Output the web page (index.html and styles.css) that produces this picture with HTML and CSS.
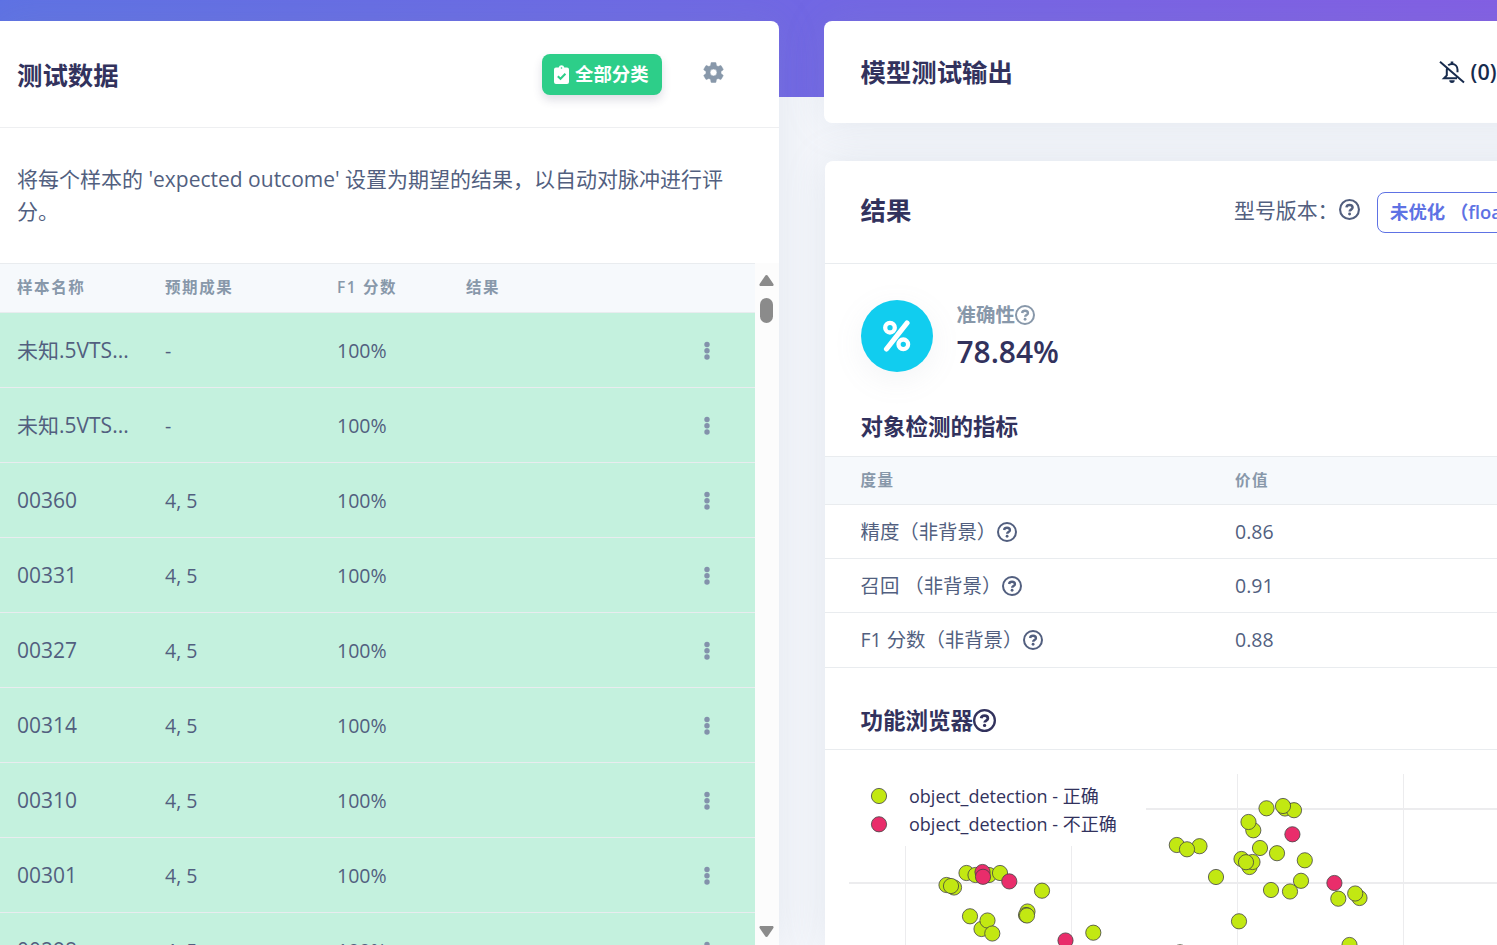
FILE: index.html
```html
<!DOCTYPE html>
<html lang="zh-CN">
<head>
<meta charset="utf-8">
<title>模型测试</title>
<link rel="stylesheet" href="styles.css">
</head>
<body>
<svg class="defs" width="0" height="0">
  <symbol id="help" viewBox="0 0 24 24"><g fill="none" stroke="currentColor"><circle cx="12" cy="12" r="10.800" stroke-width="2.400"/><path d="M8.500 9.600C8.800 7.900 10.200 6.900 12 6.900c2 0 3.500 1.100 3.500 2.900 0 2.300-3.300 2.300-3.300 4.400" stroke-width="2.900"/></g><circle cx="12.100" cy="17.100" r="1.700" fill="currentColor"/></symbol>
  <symbol id="dots" viewBox="0 0 6 20"><g fill="#8392ab"><circle cx="3" cy="3.500" r="2.700"/><circle cx="3" cy="9.700" r="2.700"/><circle cx="3" cy="16" r="2.700"/></g></symbol>
</svg>
<div class="banner"></div>
<main class="page">
  <section class="card samples">
    <header class="samples-head">
      <h2>测试数据</h2>
      <button class="classify"><svg width="15" height="19" viewBox="0 0 15 19"><path fill="#fff" d="M2 2.500h2.700a2.900 2.900 0 0 1 5.600 0H13a2 2 0 0 1 2 2V17a2 2 0 0 1-2 2H2a2 2 0 0 1-2-2V4.500a2 2 0 0 1 2-2z"/><path d="M3.800 11.200l2.700 2.600 4.900-5" fill="none" stroke="#2dce89" stroke-width="2"/><circle cx="7.500" cy="3" r=".8" fill="#2dce89"/></svg><span>全部分类</span></button>
      <svg class="gear" width="25" height="25" viewBox="0 0 24 24"><path fill="#8898aa" stroke="#8898aa" stroke-width=".5" d="M19.140 12.940c.04-.3.060-.610.060-.940 0-.320-.020-.640-.070-.940l2.030-1.580a.49.49 0 0 0 .12-.610l-1.920-3.320a.488.488 0 0 0-.590-.220l-2.390.960c-.5-.380-1.030-.700-1.620-.940l-.360-2.540a.484.484 0 0 0-.480-.410h-3.840c-.240 0-.430.170-.470.410l-.360 2.540c-.590.240-1.130.570-1.620.940l-2.390-.960c-.220-.080-.470 0-.590.220L2.740 8.870c-.120.210-.080.470.120.610l2.030 1.580c-.050.300-.090.630-.090.940s.020.640.070.940l-2.030 1.580a.49.49 0 0 0-.120.610l1.920 3.320c.120.220.370.290.590.220l2.390-.960c.500.380 1.030.700 1.620.940l.360 2.540c.050.240.240.410.480.410h3.840c.240 0 .440-.170.470-.410l.360-2.540c.590-.240 1.130-.560 1.620-.940l2.390.960c.220.080.470 0 .590-.220l1.920-3.320c.120-.220.070-.470-.120-.610l-2.010-1.580zM12 15.300a3.300 3.300 0 1 1 0-6.600 3.300 3.300 0 0 1 0 6.600z"/></svg>
    </header>
    <p class="hint">将每个样本的 'expected outcome' 设置为期望的结果，以自动对脉冲进行评分。</p>
    <div class="table-wrap">
      <div class="table">
        <div class="tr th"><span>样本名称</span><span>预期成果</span><span>F1 分数</span><span>结果</span><i></i></div>
        <div class="tr cjk"><span>未知.5VTS...</span><span>-</span><span>100%</span><span></span><svg><use href="#dots"/></svg></div>
        <div class="tr cjk"><span>未知.5VTS...</span><span>-</span><span>100%</span><span></span><svg><use href="#dots"/></svg></div>
        <div class="tr"><span>00360</span><span>4, 5</span><span>100%</span><span></span><svg><use href="#dots"/></svg></div>
        <div class="tr"><span>00331</span><span>4, 5</span><span>100%</span><span></span><svg><use href="#dots"/></svg></div>
        <div class="tr"><span>00327</span><span>4, 5</span><span>100%</span><span></span><svg><use href="#dots"/></svg></div>
        <div class="tr"><span>00314</span><span>4, 5</span><span>100%</span><span></span><svg><use href="#dots"/></svg></div>
        <div class="tr"><span>00310</span><span>4, 5</span><span>100%</span><span></span><svg><use href="#dots"/></svg></div>
        <div class="tr"><span>00301</span><span>4, 5</span><span>100%</span><span></span><svg><use href="#dots"/></svg></div>
        <div class="tr"><span>00298</span><span>4, 5</span><span>100%</span><span></span><svg><use href="#dots"/></svg></div>
      </div>
      <div class="scrollbar">
        <svg width="15" height="11" viewBox="0 0 15 11"><path fill="#8b8b8b" d="M6.200.8a1.500 1.500 0 0 1 2.600 0l5.600 8.200c.5.900 0 2-1.100 2H1.700C.6 11 .1 9.900.6 9z"/></svg>
        <div class="thumb"></div>
        <svg class="down" width="15" height="11" viewBox="0 0 15 11"><path fill="#8b8b8b" d="M6.200 10.200a1.500 1.500 0 0 0 2.600 0L14.400 2c.5-.9 0-2-1.100-2H1.700C.6 0 .1 1.100.6 2z"/></svg>
      </div>
    </div>
  </section>
  <div class="right">
    <section class="card output">
      <h2>模型测试输出</h2>
      <div class="bell"><svg width="26" height="26" viewBox="0 0 26 26" fill="none" stroke="#172b4d" stroke-width="2"><path d="M1 2.700L25 23.500M9.200 6.300C10.300 5.400 11.600 5 13 5c3.300 0 5.500 2.500 5.500 5.700v2.500M8 9.500c-.2.700-.2 1-.2 1.700v5.200L5 19.300h13"/><path d="M13 2.500v3" stroke-width="2.600"/><path d="M10.300 21.200h5.400a2.700 2.700 0 0 1-5.400 0z" fill="#172b4d" stroke="none"/></svg><span>(0)</span></div>
    </section>
    <section class="card results">
      <header class="results-head">
        <h2>结果</h2>
        <div class="version"><span>型号版本：</span><svg class="help"><use href="#help"/></svg><button class="select">未优化 （float32）</button></div>
      </header>
      <div class="accuracy">
        <div class="badge"><svg width="30" height="32" viewBox="0 0 30 32" fill="none" stroke="#fff"><path d="M4.500 29L25 3" stroke-width="5.200" stroke-linecap="round"/><circle cx="8" cy="7.700" r="4.800" stroke-width="4.300"/><circle cx="21.300" cy="24.300" r="4.800" stroke-width="4.300"/></svg></div>
        <div class="score"><div class="score-label">准确性<svg class="help"><use href="#help"/></svg></div><strong>78.84%</strong></div>
      </div>
      <h3>对象检测的指标</h3>
      <div class="metrics">
        <div class="metric mh"><span>度量</span><span>价值</span></div>
        <div class="metric"><span>精度（非背景）<svg class="help"><use href="#help"/></svg></span><span>0.86</span></div>
        <div class="metric"><span>召回 （非背景）<svg class="help"><use href="#help"/></svg></span><span>0.91</span></div>
        <div class="metric last"><span>F1 分数（非背景）<svg class="help"><use href="#help"/></svg></span><span>0.88</span></div>
      </div>
      <h3 class="explorer">功能浏览器<svg class="help"><use href="#help"/></svg></h3>
      <svg class="plot" width="672" height="195" viewBox="825 750 672 195">
        <g stroke="#ececee" stroke-width="2" fill="none"><path d="M1146 809H1497M849 883H1497"/><path stroke-width="1" d="M905.500 846V945M1071.500 846V945M1237.500 774V945M1403.500 774V945"/></g>
        <g fill="#c2e812" stroke="#444" stroke-opacity=".8" stroke-width="1">
          <circle cx="954" cy="887.500" r="7.600"/><circle cx="946.500" cy="885" r="7.600"/><circle cx="951" cy="886" r="7.600"/>
          <circle cx="966.500" cy="873" r="7.600"/><circle cx="989" cy="875" r="7.600"/><circle cx="975.500" cy="875" r="7.600"/><circle cx="1000" cy="873" r="7.600"/>
          <circle cx="1042" cy="890.700" r="7.600"/><circle cx="970" cy="916.300" r="7.600"/><circle cx="981.500" cy="929" r="7.600"/><circle cx="987.500" cy="920.500" r="7.600"/><circle cx="992.300" cy="933.500" r="7.600"/>
          <circle cx="1027.500" cy="911.500" r="7.600"/><circle cx="1026" cy="915" r="7.600"/><circle cx="1027" cy="915.500" r="7.600"/><circle cx="1093.300" cy="932.700" r="7.600"/>
          <circle cx="1176.800" cy="845" r="7.600"/><circle cx="1199.500" cy="846.200" r="7.600"/><circle cx="1187" cy="849.300" r="7.600"/>
          <circle cx="1266.500" cy="808.300" r="7.600"/><circle cx="1285" cy="808.500" r="7.600"/><circle cx="1294" cy="810.200" r="7.600"/><circle cx="1283" cy="806" r="7.600"/>
          <circle cx="1253.300" cy="830.300" r="7.600"/><circle cx="1248.500" cy="822" r="7.600"/><circle cx="1260" cy="848" r="7.600"/><circle cx="1277" cy="853.200" r="7.600"/><circle cx="1304.800" cy="860.300" r="7.600"/>
          <circle cx="1249.500" cy="867" r="7.600"/><circle cx="1241.500" cy="859" r="7.600"/><circle cx="1252.500" cy="862" r="7.600"/><circle cx="1246" cy="862.200" r="7.600"/>
          <circle cx="1216" cy="877" r="7.600"/><circle cx="1271" cy="890" r="7.600"/><circle cx="1290" cy="891.500" r="7.600"/><circle cx="1301" cy="880.800" r="7.600"/>
          <circle cx="1338.300" cy="898.700" r="7.600"/><circle cx="1359.500" cy="898" r="7.600"/><circle cx="1355.200" cy="893.500" r="7.600"/><circle cx="1239" cy="921.300" r="7.600"/><circle cx="1349.500" cy="945" r="7.600"/><circle cx="1180" cy="952.300" r="7.600"/>
          <circle cx="879" cy="796" r="7.600"/>
        </g>
        <g fill="#e92d6b" stroke="#444" stroke-opacity=".8" stroke-width="1"><circle cx="982.500" cy="872" r="7.600"/><circle cx="983" cy="876.800" r="7.600"/><circle cx="1009.300" cy="881.400" r="7.600"/><circle cx="1065.500" cy="940.500" r="7.600"/><circle cx="1292.400" cy="834.300" r="7.600"/><circle cx="1334.400" cy="883" r="7.600"/><circle cx="879" cy="824.300" r="7.600"/></g>
        <g class="legend"><text x="909" y="803">object_detection - 正确</text><text x="909" y="831">object_detection - 不正确</text></g>
      </svg>
    </section>
  </div>
</main>
</body>
</html>
```

FILE: styles.css
```css
* { box-sizing: border-box; }
body { margin: 0; width: 1497px; height: 945px; overflow: hidden; position: relative; background: #f4f6fb; color: #525f7f; font-family: "Open Sans", "Noto Sans CJK SC", sans-serif; }
h2, h3, p { margin: 0; }
svg { flex: none; }
.defs { position: absolute; }
.banner { position: absolute; inset: 0 0 auto; height: 97px; background: linear-gradient(87deg, #5e72e4, #825ee4); }
.page { position: relative; height: 945px; padding-top: 21px; display: grid; grid-template-columns: 779px 720px; column-gap: 45px; }
.card { background: #fff; box-shadow: 0 0 42px rgba(136, 152, 170, .15); }
h2 { font-size: 25.4px; line-height: 36px; font-weight: 600; color: #32325d; }
h3 { font-size: 22.5px; line-height: 32px; font-weight: 600; color: #32325d; }
.samples { height: 924px; overflow: hidden; border-radius: 0 8px 0 0; }
.samples-head { height: 107px; padding: 0 53px 0 17px; display: flex; align-items: center; border-bottom: 1px solid #eeeff1; }
.samples-head h2 { margin-right: auto; margin-top: 2px; }
.classify { width: 120px; height: 41px; padding: 0 0 0 12px; display: flex; align-items: center; gap: 6px; border: 0; border-radius: 8px; background: #2dce89; color: #fff; font: 700 18.4px/26px "Open Sans", "Noto Sans CJK SC", sans-serif; box-shadow: 0 5px 10px rgba(50, 50, 93, .16); }
.classify span { white-space: nowrap; }
.gear { margin: -3px 0 0 39px; }
.hint { height: 135px; padding: 35px 50px 0 17px; font-size: 21px; line-height: 32px; }
.table-wrap { display: flex; height: 682px; }
.table { width: 755px; }
.tr { height: 75px; display: grid; grid-template-columns: 148px 172px 129px 238px 6px; padding-left: 17px; align-items: center; background: #c4f1de; border-bottom: 1px solid #e9ecef; font-size: 19.500px; white-space: nowrap; }
.tr > span:first-child { font-size: 21px; margin-top: -1px; }
.tr.cjk > span:first-child { margin-top: -3px; }
.tr svg { width: 6px; height: 20px; margin-top: 2px; }
.tr.th { height: 50px; padding-bottom: 4px; background: #f6f9fc; border-top: 1px solid #e9ecef; color: #8898aa; font-weight: 600; }
.tr.th > span { margin-top: 0; font-size: 15.500px; letter-spacing: 1.600px; }
.scrollbar { width: 24px; display: flex; flex-direction: column; align-items: center; padding: 12px 2px 8px 0; background: #fcfcfc; }
.thumb { width: 13px; height: 25px; margin-top: 12px; border-radius: 7px; background: #8b8b8b; }
.down { margin-top: auto; }
.right { display: flex; flex-direction: column; gap: 38px; }
.output { height: 102px; border-radius: 8px; padding: 0 47.500px 0 36.500px; display: flex; align-items: center; justify-content: space-between; }
.bell { display: flex; align-items: center; gap: 6px; color: #172b4d; font-size: 22px; font-weight: 600; line-height: 30px; }
.bell span { font-size: 21.500px; margin-top: -1px; }
.results { height: 784px; border-radius: 8px 8px 0 0; margin-left: 1px; overflow: hidden; }
.results-head { height: 103px; border-bottom: 1px solid #e9ecef; padding-left: 35.500px; display: flex; align-items: center; }
.results-head h2 { width: 373.500px; flex: none; margin-top: -5px; }
.version { display: flex; align-items: center; white-space: nowrap; font-size: 20.900px; }
.version > span { margin-top: -7px; width: 104.500px; }
.version .help { margin-top: -5px; }
.help { width: 21px; height: 21px; flex: none; overflow: visible; }
.select { width: 190px; height: 41px; margin-left: 17.500px; padding: 0 12px 2px; border: 1px solid #5e72e4; border-radius: 8px; background: #fff; color: #5e72e4; text-align: left; font: 600 18.400px "Open Sans", "Noto Sans CJK SC", sans-serif; }
.accuracy { height: 147px; padding: 36px 0 0 36px; display: flex; gap: 23.500px; }
.badge { width: 72px; height: 72px; border-radius: 50%; display: flex; align-items: center; justify-content: center; background: #11cdef; box-shadow: 0 8px 30px rgba(136, 152, 170, .1); }
.score-label { height: 30px; padding-bottom: 3px; display: flex; align-items: center; color: #8898aa; font-size: 19.500px; font-weight: 600; }
.score-label .help { width: 20px; height: 20px; margin-top: 2px; }
.score strong { display: block; font-size: 29.900px; line-height: 44px; font-weight: 600; color: #32325d; }
.results h3 { padding-left: 35.500px; }
.metrics { margin-top: 13px; }
.metric { height: 54px; padding: 0 0 1px 35.500px; display: grid; grid-template-columns: 374.500px 1fr; align-items: center; border-bottom: 1px solid #e9ecef; font-size: 19.500px; }
.metric span { display: flex; align-items: center; }
.metric span:first-child { margin-top: -1px; font-size: 19.400px; }
.metric .help { width: 20px; height: 20px; margin: 2px 0 0 .5px; }
.metric.mh { height: 49px; padding-bottom: 2px; background: #f6f9fc; border-top: 1px solid #e9ecef; color: #8898aa; font-size: 15.500px; font-weight: 600; letter-spacing: 1.500px; }
.metric.mh span { margin-top: 0; font-size: 15.500px; }
.metric.last { height: 55px; padding-bottom: 2px; }
.results .explorer { height: 82px; padding-top: 24px; display: flex; align-items: center; border-bottom: 1px solid #e9ecef; }
.explorer .help { width: 23px; height: 23px; }
.plot { display: block; }
.legend { fill: #32325d; font-size: 18px; }
```
